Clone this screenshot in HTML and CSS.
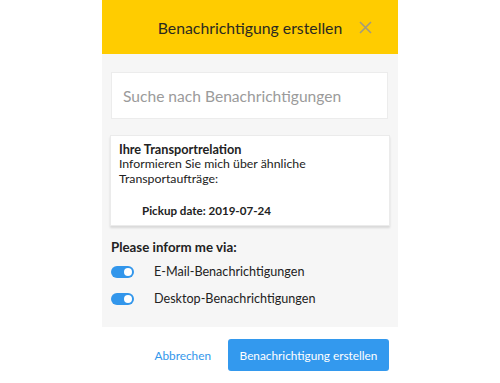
FILE: index.html
```html
<!DOCTYPE html>
<html lang="de">
<head>
    <meta charset="UTF-8">
    <title>Benachrichtigung erstellen</title>
    <link rel="stylesheet" href="styles.css">
</head>
<body>
    <div class="modal">
        <div class="modal-header">
            <h2>Benachrichtigung erstellen</h2>
            <span class="close">
                <svg width="13" height="13" viewBox="0 0 13 13"><path d="M1 1L12 12M12 1L1 12" stroke="#a39a7e" stroke-width="1.6"/></svg>
            </span>
        </div>

        <div class="modal-body">
            <input type="text" class="search" placeholder="Suche nach Benachrichtigungen">

            <div class="relation-card">
                <p class="card-title">Ihre Transportrelation</p>
                <p>Informieren Sie mich über ähnliche<br>Transportaufträge:</p>
                <p class="pickup">Pickup date: 2019-07-24</p>
            </div>

            <p class="inform-label">Please inform me via:</p>
            <div class="toggle-row">
                <span class="toggle"></span>
                <span>E-Mail-Benachrichtigungen</span>
            </div>
            <div class="toggle-row">
                <span class="toggle"></span>
                <span>Desktop-Benachrichtigungen</span>
            </div>
        </div>

        <div class="modal-footer">
            <a class="cancel">Abbrechen</a>
            <button class="submit">Benachrichtigung erstellen</button>
        </div>
    </div>
</body>
</html>
```

FILE: styles.css
```css
/* General */
body {
    margin: 0;
    background: #fff;
    font-family: Lato, "Open Sans", sans-serif;
    color: #222;
}

.modal {
    width: 296px;
    margin-left: 102px;
}

/* Header */
.modal-header {
    height: 54px;
    background: #ffcc00;
    display: flex;
    align-items: center;
    justify-content: center;
    position: relative;
}

.modal-header h2 {
    margin: 0;
    font-size: 15.8px;
    font-weight: 400;
    color: #2b2a20;
}

.close {
    position: absolute;
    right: 26px;
    top: 21px;
    line-height: 0;
}

/* Body */
.modal-body {
    background: #f6f6f6;
    padding: 18px 10px 19px 9px;
}

.search {
    box-sizing: border-box;
    width: 100%;
    height: 47px;
    border: 1px solid #ececec;
    background: #fff;
    padding: 0 11px;
    font-family: inherit;
    font-size: 15.6px;
    outline: none;
}

.search::placeholder {
    color: #9b9b9b;
}

.relation-card {
    margin: 16px -2px 0 -1px;
    background: #fff;
    border: 1px solid #ebebeb;
    box-shadow: 0 2px 2px rgba(0, 0, 0, 0.12);
    padding: 6px 8px 11px;
    font-size: 12.3px;
    line-height: 15px;
    height: 72px;
}

.relation-card p {
    margin: 0;
}

.card-title {
    font-weight: 700;
    font-size: 12.7px;
    margin-bottom: -1px !important;
}

.pickup {
    font-weight: 700;
    padding-left: 23px;
    margin-top: 17px !important;
    font-size: 11.6px;
}

.inform-label {
    margin: 13px 0 0;
    font-weight: 700;
    font-size: 13.3px;
}

.toggle-row {
    display: flex;
    align-items: center;
    gap: 20px;
    margin-top: 7px;
    font-size: 12.6px;
    height: 19px;
}

.toggle-row + .toggle-row {
    margin-top: 8px;
}

.toggle {
    width: 23px;
    height: 12px;
    border-radius: 6px;
    background: #3296eb;
    position: relative;
}

.toggle::after {
    content: "";
    position: absolute;
    right: 2px;
    top: 2px;
    width: 8px;
    height: 8px;
    border-radius: 50%;
    background: #fff;
}

/* Footer */
.modal-footer {
    display: flex;
    justify-content: flex-end;
    align-items: center;
    gap: 17px;
    padding: 12px 9px 0 0;
}

.cancel {
    color: #3296eb;
    font-size: 11.8px;
}

.submit {
    height: 32px;
    width: 161px;
    background: #3399ee;
    color: #fff;
    border: none;
    border-radius: 3px;
    font-family: inherit;
    font-size: 11.8px;
    white-space: nowrap;
}
```
